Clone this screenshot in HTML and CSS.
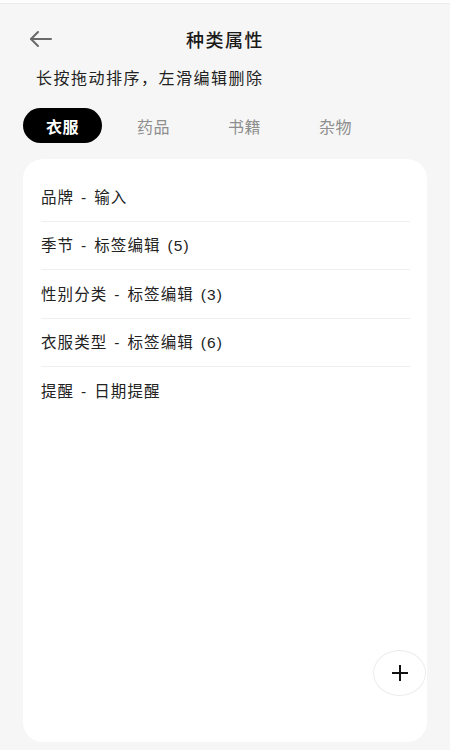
FILE: index.html
```html
<!DOCTYPE html>
<html lang="zh-CN">
<head>
    <meta charset="UTF-8">
    <meta name="viewport" content="width=device-width, initial-scale=1.0">
    <title>种类属性</title>
    <link rel="stylesheet" href="styles.css">
</head>
<body>
    <div class="status-bar"></div>

    <div class="header">
        <button class="back-btn" aria-label="返回">
            <svg viewBox="0 0 24 24" width="24" height="24" fill="none" stroke="currentColor" stroke-width="2" stroke-linecap="round" stroke-linejoin="round">
                <path d="M22 12H2"/>
                <path d="M9 5l-7 7 7 7"/>
            </svg>
        </button>
        <div class="title">种类属性</div>
    </div>

    <div class="hint">长按拖动排序，左滑编辑删除</div>

    <div class="tabs">
        <div class="tab active">衣服</div>
        <div class="tab">药品</div>
        <div class="tab">书籍</div>
        <div class="tab">杂物</div>
    </div>

    <div class="card">
        <div class="attr-list">
            <div class="attr-item">品牌 - 输入</div>
            <div class="attr-item">季节 - 标签编辑 (5)</div>
            <div class="attr-item">性别分类 - 标签编辑 (3)</div>
            <div class="attr-item">衣服类型 - 标签编辑 (6)</div>
            <div class="attr-item">提醒 - 日期提醒</div>
        </div>

        <button class="add-btn" aria-label="添加">
            <svg viewBox="0 0 18 18" width="18" height="18" fill="none" stroke="currentColor" stroke-width="2">
                <path d="M9 1v16"/>
                <path d="M1 9h16"/>
            </svg>
        </button>
    </div>
</body>
</html>
```

FILE: styles.css
```css
* {
    margin: 0;
    padding: 0;
    box-sizing: border-box;
}

body {
    font-family: "Noto Sans CJK SC", "Noto Sans", sans-serif;
    background: #f6f6f6;
    color: #222;
    width: 450px;
    height: 750px;
    overflow: hidden;
}

.status-bar {
    height: 4px;
    background: #fdfdfd;
    border-bottom: 1px solid #ececec;
}

.header {
    position: relative;
    height: 44px;
    margin-top: 13px;
    display: flex;
    align-items: center;
    justify-content: center;
}

.back-btn {
    position: absolute;
    left: 29px;
    top: 10px;
    width: 24px;
    height: 24px;
    border: none;
    background: none;
    color: #6a6a6a;
    display: flex;
}

.title {
    font-size: 18px;
    font-weight: 500;
    color: #1a1a1a;
    letter-spacing: 1.5px;
}

.hint {
    margin-top: 4px;
    padding-left: 36px;
    font-size: 16px;
    line-height: 24px;
    letter-spacing: 1.5px;
    color: #222;
}

.tabs {
    display: flex;
    gap: 12px;
    margin-top: 19px;
    padding-left: 23px;
}

.tab {
    width: 79px;
    height: 35px;
    border-radius: 18px;
    display: flex;
    align-items: center;
    justify-content: center;
    font-size: 16px;
    color: #8e8e8e;
    letter-spacing: 0.5px;
}

.tab.active {
    background: #000;
    color: #fff;
    font-weight: 700;
}

.card {
    position: relative;
    margin: 16px 23px 0 23px;
    height: 583px;
    background: #fff;
    border-radius: 20px;
    padding: 14px 17px 0 18px;
}

.attr-item {
    height: 48.5px;
    display: flex;
    align-items: center;
    font-family: "Liberation Sans", "Noto Sans CJK SC", sans-serif;
    font-size: 15.5px;
    word-spacing: 1.5px;
    letter-spacing: 1.1px;
    color: #222;
    border-bottom: 1px solid #efefef;
    padding-bottom: 2px;
}

.attr-item:last-child {
    border-bottom: none;
}

.add-btn {
    position: absolute;
    right: 1px;
    top: 491px;
    width: 53px;
    height: 46px;
    border-radius: 50%;
    border: 1px solid #ececec;
    background: #fff;
    color: #111;
    display: flex;
    align-items: center;
    justify-content: center;
}
```
